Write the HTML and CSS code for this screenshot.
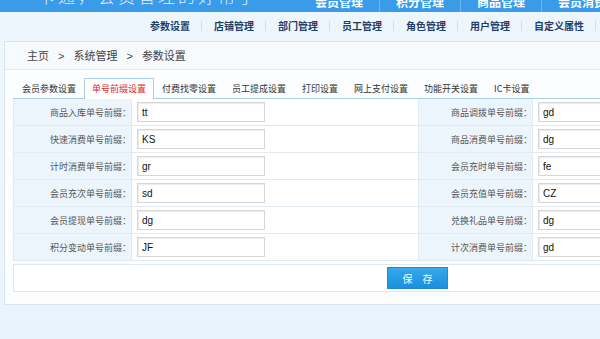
FILE: index.html
```html
<!DOCTYPE html>
<html lang="zh-CN">
<head>
<meta charset="utf-8">
<title>参数设置</title>
<link rel="stylesheet" href="styles.css">
</head>
<body>
<div class="topbar">
  <div class="logo">一卡通，会员管理的好帮手</div>
  <ul class="topnav">
    <li>会员管理</li>
    <li>积分管理</li>
    <li>商品管理</li>
    <li>会员消费</li>
  </ul>
</div>
<div class="subnav">
  <ul class="subnav-list">
    <li>参数设置</li>
    <li>店铺管理</li>
    <li>部门管理</li>
    <li>员工管理</li>
    <li>角色管理</li>
    <li>用户管理</li>
    <li>自定义属性</li>
  </ul>
</div>
<div class="panel">
  <div class="crumbs">
    <span>主页</span><span class="sep">&gt;</span><span>系统管理</span><span class="sep">&gt;</span><span>参数设置</span>
  </div>
  <div class="content">
    <ul class="tabs">
      <li>会员参数设置</li>
      <li class="active">单号前缀设置</li>
      <li>付费找零设置</li>
      <li>员工提成设置</li>
      <li>打印设置</li>
      <li>网上支付设置</li>
      <li>功能开关设置</li>
      <li>IC卡设置</li>
    </ul>
    <table class="form">
      <colgroup>
        <col class="c-label1"><col class="c-val1"><col class="c-label2"><col class="c-val2">
      </colgroup>
      <tr>
        <th>商品入库单号前缀：</th><td><input class="ipt" value="tt"></td>
        <th>商品调拨单号前缀：</th><td><input class="ipt" value="gd"></td>
      </tr>
      <tr>
        <th>快速消费单号前缀：</th><td><input class="ipt" value="KS"></td>
        <th>商品消费单号前缀：</th><td><input class="ipt" value="dg"></td>
      </tr>
      <tr>
        <th>计时消费单号前缀：</th><td><input class="ipt" value="gr"></td>
        <th>会员充时单号前缀：</th><td><input class="ipt" value="fe"></td>
      </tr>
      <tr>
        <th>会员充次单号前缀：</th><td><input class="ipt" value="sd"></td>
        <th>会员充值单号前缀：</th><td><input class="ipt" value="CZ"></td>
      </tr>
      <tr>
        <th>会员提现单号前缀：</th><td><input class="ipt" value="dg"></td>
        <th>兑换礼品单号前缀：</th><td><input class="ipt" value="dg"></td>
      </tr>
      <tr>
        <th>积分变动单号前缀：</th><td><input class="ipt" value="JF"></td>
        <th>计次消费单号前缀：</th><td><input class="ipt" value="gd"></td>
      </tr>
    </table>
    <div class="actions">
      <button class="btn" type="button">保 存</button>
    </div>
  </div>
</div>
</body>
</html>
```
FILE: styles.css
```css
html, body {
  margin: 0;
  padding: 0;
  overflow: hidden;
  width: 600px;
  height: 339px;
}
body {
  background: linear-gradient(#eef7fe, #e8f4fd);
  font-family: "Noto Sans CJK SC", "Liberation Sans", sans-serif;
  color: #333;
}
ul {
  list-style: none;
  margin: 0;
  padding: 0;
}
.topbar {
  height: 12px;
  background: #3a9be8;
  overflow: hidden;
  display: flex;
  color: #fff;
}
.logo {
  font-size: 17px;
  font-weight: 300;
  line-height: 0px;
  margin-top: -4px;
  padding-left: 18px;
  letter-spacing: 3px;
  width: 281px;
  white-space: nowrap;
  overflow: hidden;
  flex: none;
  opacity: 0.85;
}
.topnav {
  display: flex;
  flex: none;
}
.topnav li {
  font-size: 12px;
  font-weight: bold;
  line-height: 4px;
  padding: 0 16px;
  border-right: 1px solid #6db6ee;
  height: 12px;
  white-space: nowrap;
}
.subnav {
  height: 28px;
  background: #eef6fd;
  overflow: hidden;
}
.subnav-list {
  display: flex;
  margin-left: 138px;
  padding-top: 8px;
}
.subnav-list li {
  font-size: 10px;
  font-weight: bold;
  color: #1f3f66;
  line-height: 12px;
  padding: 0 12px;
  white-space: nowrap;
  position: relative;
}
.subnav-list li::after {
  content: "";
  position: absolute;
  right: 0;
  top: 1px;
  width: 1px;
  height: 10px;
  background: #d4dce4;
}
.panel {
  margin: 1px 0 0 4px;
  width: 830px;
  height: 262px;
  border: 1px solid #dbe5ee;
  background: #fcfdfe;
}
.crumbs {
  height: 27px;
  line-height: 27px;
  border-bottom: 1px solid #e1e8ef;
  background: #f7fafd;
  padding-left: 22px;
  font-size: 11px;
  color: #444;
}
.crumbs .sep {
  margin: 0 9px;
  font-family: "Liberation Sans", sans-serif;
}
.content {
  padding: 8px 8px 0 8px;
}
.tabs {
  display: flex;
  height: 20px;
  border-bottom: 1px solid #a8cfeb;
  padding-left: 1px;
}
.tabs li {
  font-size: 9px;
  line-height: 20px;
  padding: 0 7px;
  border: 1px solid transparent;
  border-bottom: none;
  color: #333;
  white-space: nowrap;
}
.tabs li.active {
  color: #e0282c;
  border-color: #a8cfeb;
  background: #fff;
  margin-bottom: -1px;
  height: 20px;
}
.form {
  border-collapse: collapse;
  width: 809px;
  table-layout: fixed;
}
.c-label1 { width: 118px; }
.c-val1 { width: 287px; }
.c-label2 { width: 114px; }
.c-val2 { width: 290px; }
.form th, .form td {
  height: 26px;
  padding: 0;
  border: 1px solid #e2eaf1;
  border-top: none;
}
.form th {
  background: #edf5fc;
  font-weight: normal;
  font-size: 9px;
  color: #555;
  text-align: right;
  padding-right: 0;
  white-space: nowrap;
}
.form td {
  background: #fff;
  padding-left: 5px;
}
.ipt {
  display: block;
  box-sizing: border-box;
  width: 128px;
  height: 20px;
  border: 1px solid #d6d6d6;
  box-shadow: inset 1px 1px 1px #ececec;
  padding: 0 4px;
  font-family: "Liberation Sans", sans-serif;
  font-size: 10px;
  color: #111;
  background: #fff;
  outline: none;
}
.actions {
  margin-top: 3px;
  width: 809px;
  box-sizing: border-box;
  height: 28px;
  border: 1px solid #e1e7ee;
  background: #fff;
  display: flex;
  justify-content: center;
  align-items: center;
}
.btn {
  width: 61px;
  height: 22px;
  border: 1px solid #1e8ed6;
  background: linear-gradient(#35a9ec, #1a90dc);
  color: #fff;
  font-family: "Noto Sans CJK SC", sans-serif;
  font-size: 10px;
  letter-spacing: 4px;
  padding: 0 0 0 4px;
  cursor: pointer;
}
```
